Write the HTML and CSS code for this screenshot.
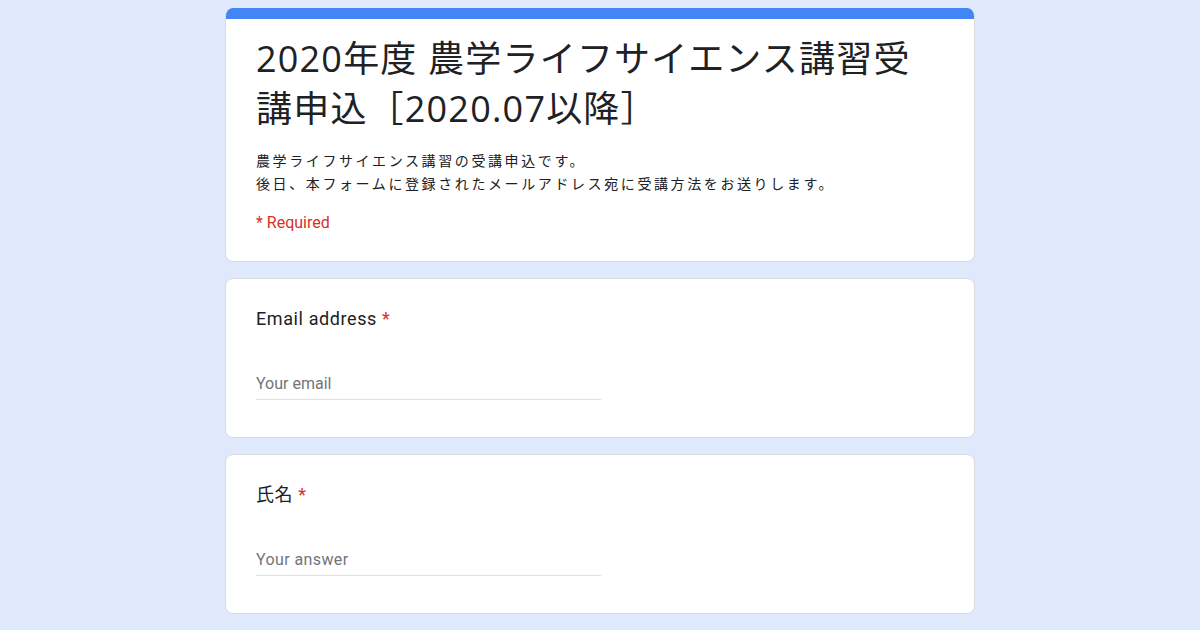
FILE: index.html
```html
<!DOCTYPE html>
<html lang="ja">
<head>
  <meta charset="UTF-8" />
  <title>2020年度 農学ライフサイエンス講習受講申込［2020.07以降］</title>
  <link rel="stylesheet" href="styles.css">
</head>
<body>

<div class="container">
  <div class="card header-card">
    <div class="accent"></div>
    <div class="header-body">
      <h1>2020年度 農学ライフサイエンス講習受講申込［2020.07以降］</h1>
      <p class="description">農学ライフサイエンス講習の受講申込です。<br>後日、本フォームに登録されたメールアドレス宛に受講方法をお送りします。</p>
      <p class="required-note">* Required</p>
    </div>
  </div>

  <div class="card question">
    <div class="label">Email address <span class="star">*</span></div>
    <input type="email" class="answer" placeholder="Your email">
  </div>

  <div class="card question">
    <div class="label">氏名 <span class="star">*</span></div>
    <input type="text" class="answer answer-spaced" placeholder="Your answer">
  </div>

  <div class="card question"></div>
</div>

</body>
</html>
```

FILE: styles.css
```css
body {
  margin: 0;
  background: #e0e9fb;
  font-family: Roboto, "Noto Sans CJK JP", sans-serif;
  color: #202124;
}
.container {
  width: 750px;
  margin: 0 auto;
  padding-top: 8px;
  display: flex;
  flex-direction: column;
  gap: 16px;
}
.card {
  background: #fff;
  border: 1px solid #dadce0;
  border-radius: 8px;
  box-sizing: border-box;
}
.header-card {
  border-top: none;
  overflow: hidden;
}
.accent {
  height: 11px;
  background: #4285f4;
}
.header-body {
  padding: 15px 30px 29px 30px;
}
h1 {
  margin: 0;
  font-family: "Open Sans", "Noto Sans CJK JP", sans-serif;
  font-weight: 400;
  font-size: 36px;
  line-height: 50px;
  letter-spacing: 1.2px;
  color: #202124;
}
.description {
  margin: 15px 0 0;
  font-family: "Noto Sans CJK JP", sans-serif;
  font-size: 14px;
  letter-spacing: 2.6px;
  line-height: 23px;
  color: #202124;
}
.required-note {
  margin: 18px 0 0;
  font-size: 16px;
  color: #d93025;
}
.question {
  padding: 28px 30px 37px 30px;
  min-height: 160px;
}
.label {
  font-family: Roboto, "Noto Sans CJK JP", sans-serif;
  font-size: 18px;
  line-height: 24px;
  letter-spacing: 0.6px;
  color: #202124;
}
.star {
  color: #d93025;
}
.answer {
  display: block;
  margin-top: 43px;
  width: 345px;
  border: none;
  border-bottom: 1px solid #e0e0e0;
  padding: 0 0 6px;
  font-family: Roboto, sans-serif;
  font-size: 16px;
  color: #202124;
  outline: none;
  background: transparent;
}
.answer::placeholder {
  color: #70757a;
}
.answer-spaced::placeholder {
  letter-spacing: 0.4px;
}
```
